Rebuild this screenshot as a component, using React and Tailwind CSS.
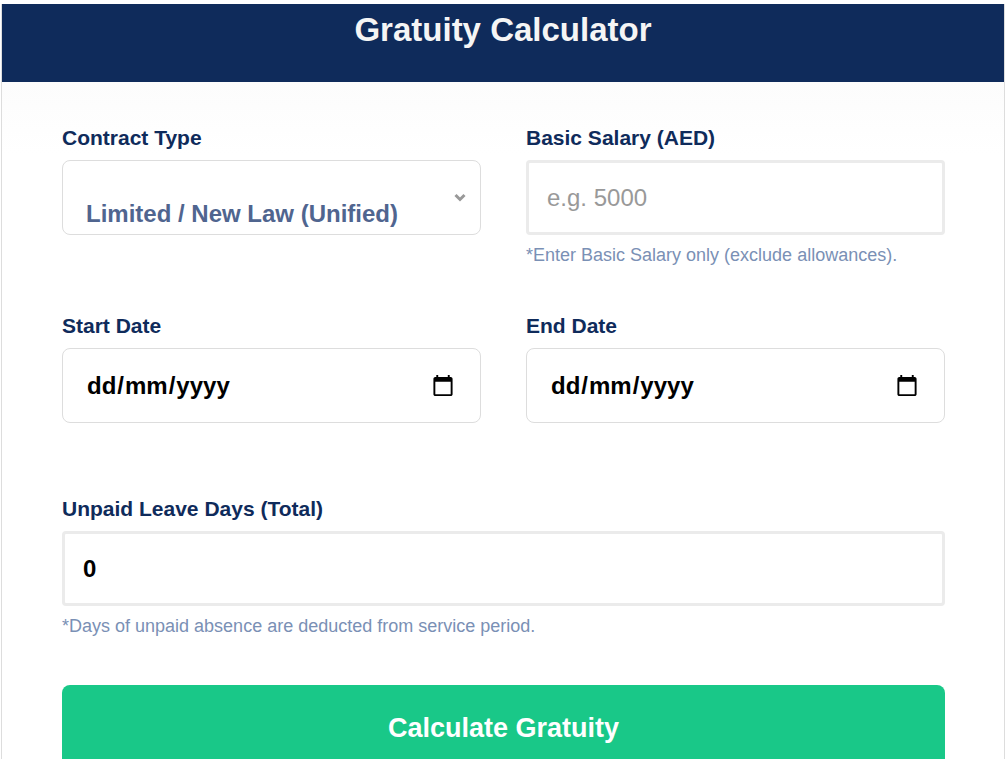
import { useState } from 'react';

const FieldLabel = ({ htmlFor, children }) => (
    <label htmlFor={htmlFor} className="block mb-[10px] text-[21px] leading-6 font-bold text-[#0f2b5b]">
        {children}
    </label>
);

const Hint = ({ id, children }) => (
    <p id={id} className="mt-2 text-lg leading-6 text-[#7a90b5]">
        {children}
    </p>
);

const DateField = ({ id, label }) => {
    const [value, setValue] = useState('');

    return (
        <div>
            <FieldLabel htmlFor={id}>{label}</FieldLabel>
            <div className="relative">
                <input
                    id={id}
                    type="date"
                    value={value}
                    onChange={(e) => setValue(e.target.value)}
                    className={`block w-full h-[75px] pl-6 pr-[23px] rounded-lg border border-[#dddddd] bg-white text-2xl font-bold text-black ${value ? '' : '[&::-webkit-datetime-edit]:opacity-0'}`}
                />
                {!value && (
                    <span aria-hidden="true" className="absolute inset-y-0 left-6 flex items-center text-2xl font-bold text-black pointer-events-none">
                        <span className="px-px">dd</span>/<span className="px-px">mm</span>/<span className="px-px">yyyy</span>
                    </span>
                )}
            </div>
        </div>
    );
};

export default function App() {
    const [contract, setContract] = useState('limited');
    const [salary, setSalary] = useState('');
    const [leaveDays, setLeaveDays] = useState('0');

    return (
        <div className="bg-white pt-1 px-px font-['Liberation_Sans',Arial,sans-serif]">
            <main className="border-x border-[#dddddd]">
                <header className="h-[78px] pt-1 bg-[#0f2b5b] text-center">
                    <h1 className="text-[33px] leading-[44px] font-bold text-[#f5f5f5]">Gratuity Calculator</h1>
                </header>

                <form onSubmit={(e) => e.preventDefault()} className="pt-11 pb-15 pl-15 pr-[59px] bg-linear-to-b from-[#fcfcfc] to-white to-[72px]">
                    <div className="grid grid-cols-2 gap-x-[45px] gap-y-[47px]">
                        <div>
                            <FieldLabel htmlFor="contract">Contract Type</FieldLabel>
                            <div className="relative">
                                <select
                                    id="contract"
                                    value={contract}
                                    onChange={(e) => setContract(e.target.value)}
                                    className="block w-full h-[75px] pt-8 pl-[23px] pr-12 appearance-none rounded-lg border border-[#dddddd] bg-white text-2xl font-bold text-[#50658f]"
                                >
                                    <option value="limited">Limited / New Law (Unified)</option>
                                    <option value="unlimited">Unlimited (Old Law)</option>
                                </select>
                                <svg viewBox="0 0 12 9" fill="none" stroke="#999999" strokeWidth="3" className="absolute top-[33px] right-[15px] w-3 h-[9px] pointer-events-none">
                                    <path d="M1.5 2 L6 6.5 L10.5 2" />
                                </svg>
                            </div>
                        </div>

                        <div>
                            <FieldLabel htmlFor="salary">Basic Salary (AED)</FieldLabel>
                            <input
                                id="salary"
                                type="number"
                                placeholder="e.g. 5000"
                                aria-describedby="salary-hint"
                                value={salary}
                                onChange={(e) => setSalary(e.target.value)}
                                className="block w-full h-[75px] px-[18px] rounded border-3 border-[#ebebeb] bg-white text-2xl text-black placeholder:text-[#999999]"
                            />
                            <Hint id="salary-hint">*Enter Basic Salary only (exclude allowances).</Hint>
                        </div>

                        <DateField id="start-date" label="Start Date" />
                        <DateField id="end-date" label="End Date" />
                    </div>

                    <div className="mt-[74px]">
                        <FieldLabel htmlFor="leave">Unpaid Leave Days (Total)</FieldLabel>
                        <input
                            id="leave"
                            type="number"
                            aria-describedby="leave-hint"
                            value={leaveDays}
                            onChange={(e) => setLeaveDays(e.target.value)}
                            className="block w-full h-[75px] px-[18px] rounded border-3 border-[#ebebeb] bg-white text-2xl font-bold text-black"
                        />
                        <Hint id="leave-hint">*Days of unpaid absence are deducted from service period.</Hint>
                    </div>

                    <button type="submit" className="block w-full mt-[47px] h-[86px] rounded-lg bg-[#19c888] text-[27px] font-bold text-white cursor-pointer">
                        Calculate Gratuity
                    </button>
                </form>
            </main>
        </div>
    );
}
